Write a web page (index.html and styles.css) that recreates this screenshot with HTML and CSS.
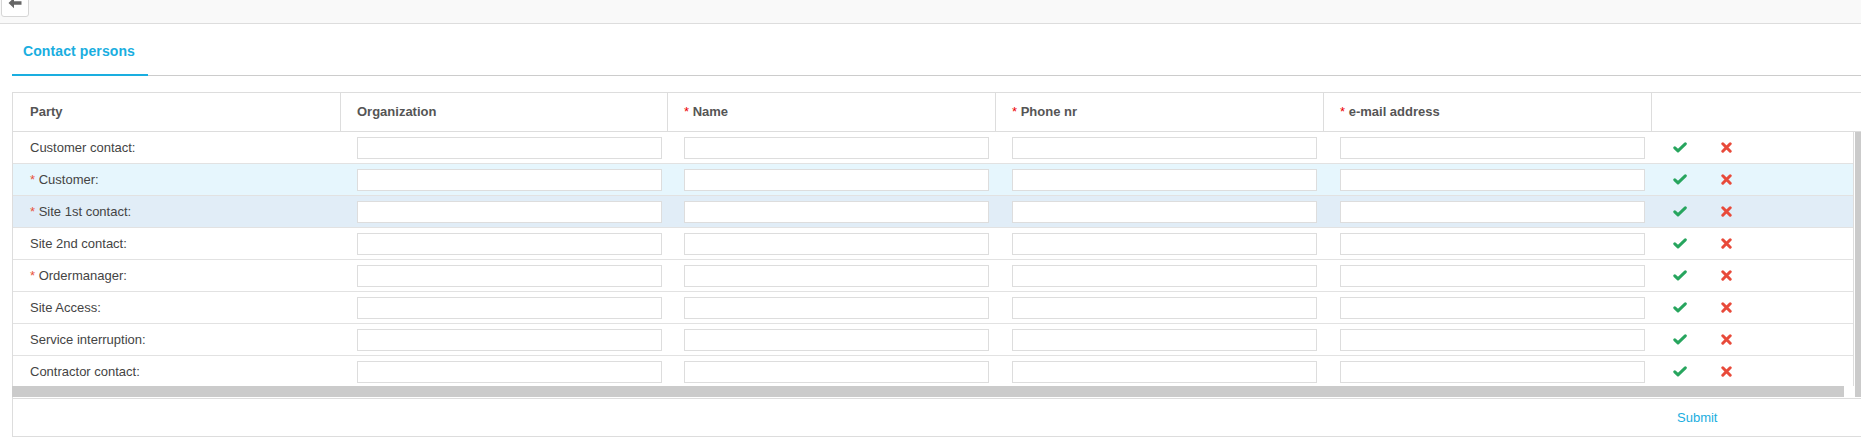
FILE: index.html
```html
<!DOCTYPE html>
<html lang="en">
<head>
<meta charset="utf-8">
<title>Contact persons</title>
<link rel="stylesheet" href="styles.css">
</head>
<body>
<div class="topbar">
  <button class="back" type="button" aria-label="Back">
    <svg width="14" height="12" viewBox="0 0 14 12"><path d="M0.5 6 L6 0.8 L6 4.3 L13.5 4.3 L13.5 7.7 L6 7.7 L6 11.2 Z" fill="#666"/></svg>
  </button>
</div>
<div class="page">
  <ul class="tabs">
    <li class="tab active">Contact persons</li>
  </ul>
  <div class="grid">
    <div class="cols grid-head">
      <div class="th"><span>Party</span></div>
      <div class="th"><span>Organization</span></div>
      <div class="th"><span><span class="req">*</span> Name</span></div>
      <div class="th"><span><span class="req">*</span> Phone nr</span></div>
      <div class="th"><span><span class="req">*</span> e-mail address</span></div>
      <div class="th"></div>
    </div>
    <div class="grid-body">
      <div class="grid-main">
        <div class="rows">
          <div class="cols row">
            <div class="td label"><span>Customer contact:</span></div>
            <div class="td"><input class="inp" type="text"></div>
            <div class="td"><input class="inp" type="text"></div>
            <div class="td"><input class="inp" type="text"></div>
            <div class="td"><input class="inp" type="text"></div>
            <div class="td acts"><svg class="ok" width="14" height="11" viewBox="0 0 14 11"><path d="M1.8 5.8 L5 8.9 L12.3 1.8" fill="none" stroke="#27a55e" stroke-width="3" stroke-linecap="round" stroke-linejoin="round"/></svg><svg class="no" width="11" height="11" viewBox="0 0 11 11"><path d="M1.8 1.8 L9.2 9.2 M9.2 1.8 L1.8 9.2" fill="none" stroke="#e84a3a" stroke-width="3" stroke-linecap="round"/></svg></div>
          </div>
          <div class="cols row hl1">
            <div class="td label"><span><span class="req2">*</span> Customer:</span></div>
            <div class="td"><input class="inp" type="text"></div>
            <div class="td"><input class="inp" type="text"></div>
            <div class="td"><input class="inp" type="text"></div>
            <div class="td"><input class="inp" type="text"></div>
            <div class="td acts"><svg class="ok" width="14" height="11" viewBox="0 0 14 11"><path d="M1.8 5.8 L5 8.9 L12.3 1.8" fill="none" stroke="#27a55e" stroke-width="3" stroke-linecap="round" stroke-linejoin="round"/></svg><svg class="no" width="11" height="11" viewBox="0 0 11 11"><path d="M1.8 1.8 L9.2 9.2 M9.2 1.8 L1.8 9.2" fill="none" stroke="#e84a3a" stroke-width="3" stroke-linecap="round"/></svg></div>
          </div>
          <div class="cols row hl2">
            <div class="td label"><span><span class="req2">*</span> Site 1st contact:</span></div>
            <div class="td"><input class="inp" type="text"></div>
            <div class="td"><input class="inp" type="text"></div>
            <div class="td"><input class="inp" type="text"></div>
            <div class="td"><input class="inp" type="text"></div>
            <div class="td acts"><svg class="ok" width="14" height="11" viewBox="0 0 14 11"><path d="M1.8 5.8 L5 8.9 L12.3 1.8" fill="none" stroke="#27a55e" stroke-width="3" stroke-linecap="round" stroke-linejoin="round"/></svg><svg class="no" width="11" height="11" viewBox="0 0 11 11"><path d="M1.8 1.8 L9.2 9.2 M9.2 1.8 L1.8 9.2" fill="none" stroke="#e84a3a" stroke-width="3" stroke-linecap="round"/></svg></div>
          </div>
          <div class="cols row">
            <div class="td label"><span>Site 2nd contact:</span></div>
            <div class="td"><input class="inp" type="text"></div>
            <div class="td"><input class="inp" type="text"></div>
            <div class="td"><input class="inp" type="text"></div>
            <div class="td"><input class="inp" type="text"></div>
            <div class="td acts"><svg class="ok" width="14" height="11" viewBox="0 0 14 11"><path d="M1.8 5.8 L5 8.9 L12.3 1.8" fill="none" stroke="#27a55e" stroke-width="3" stroke-linecap="round" stroke-linejoin="round"/></svg><svg class="no" width="11" height="11" viewBox="0 0 11 11"><path d="M1.8 1.8 L9.2 9.2 M9.2 1.8 L1.8 9.2" fill="none" stroke="#e84a3a" stroke-width="3" stroke-linecap="round"/></svg></div>
          </div>
          <div class="cols row">
            <div class="td label"><span><span class="req2">*</span> Ordermanager:</span></div>
            <div class="td"><input class="inp" type="text"></div>
            <div class="td"><input class="inp" type="text"></div>
            <div class="td"><input class="inp" type="text"></div>
            <div class="td"><input class="inp" type="text"></div>
            <div class="td acts"><svg class="ok" width="14" height="11" viewBox="0 0 14 11"><path d="M1.8 5.8 L5 8.9 L12.3 1.8" fill="none" stroke="#27a55e" stroke-width="3" stroke-linecap="round" stroke-linejoin="round"/></svg><svg class="no" width="11" height="11" viewBox="0 0 11 11"><path d="M1.8 1.8 L9.2 9.2 M9.2 1.8 L1.8 9.2" fill="none" stroke="#e84a3a" stroke-width="3" stroke-linecap="round"/></svg></div>
          </div>
          <div class="cols row">
            <div class="td label"><span>Site Access:</span></div>
            <div class="td"><input class="inp" type="text"></div>
            <div class="td"><input class="inp" type="text"></div>
            <div class="td"><input class="inp" type="text"></div>
            <div class="td"><input class="inp" type="text"></div>
            <div class="td acts"><svg class="ok" width="14" height="11" viewBox="0 0 14 11"><path d="M1.8 5.8 L5 8.9 L12.3 1.8" fill="none" stroke="#27a55e" stroke-width="3" stroke-linecap="round" stroke-linejoin="round"/></svg><svg class="no" width="11" height="11" viewBox="0 0 11 11"><path d="M1.8 1.8 L9.2 9.2 M9.2 1.8 L1.8 9.2" fill="none" stroke="#e84a3a" stroke-width="3" stroke-linecap="round"/></svg></div>
          </div>
          <div class="cols row">
            <div class="td label"><span>Service interruption:</span></div>
            <div class="td"><input class="inp" type="text"></div>
            <div class="td"><input class="inp" type="text"></div>
            <div class="td"><input class="inp" type="text"></div>
            <div class="td"><input class="inp" type="text"></div>
            <div class="td acts"><svg class="ok" width="14" height="11" viewBox="0 0 14 11"><path d="M1.8 5.8 L5 8.9 L12.3 1.8" fill="none" stroke="#27a55e" stroke-width="3" stroke-linecap="round" stroke-linejoin="round"/></svg><svg class="no" width="11" height="11" viewBox="0 0 11 11"><path d="M1.8 1.8 L9.2 9.2 M9.2 1.8 L1.8 9.2" fill="none" stroke="#e84a3a" stroke-width="3" stroke-linecap="round"/></svg></div>
          </div>
          <div class="cols row">
            <div class="td label"><span>Contractor contact:</span></div>
            <div class="td"><input class="inp" type="text"></div>
            <div class="td"><input class="inp" type="text"></div>
            <div class="td"><input class="inp" type="text"></div>
            <div class="td"><input class="inp" type="text"></div>
            <div class="td acts"><svg class="ok" width="14" height="11" viewBox="0 0 14 11"><path d="M1.8 5.8 L5 8.9 L12.3 1.8" fill="none" stroke="#27a55e" stroke-width="3" stroke-linecap="round" stroke-linejoin="round"/></svg><svg class="no" width="11" height="11" viewBox="0 0 11 11"><path d="M1.8 1.8 L9.2 9.2 M9.2 1.8 L1.8 9.2" fill="none" stroke="#e84a3a" stroke-width="3" stroke-linecap="round"/></svg></div>
          </div>
        </div>
        <div class="hscroll"></div>
      </div>
      <div class="vscroll"></div>
    </div>
    <div class="cols grid-foot">
      <div></div><div></div><div></div><div></div><div></div>
      <div class="foot-cell"><a class="submit" href="#">Submit</a></div>
    </div>
  </div>
</div>
</body>
</html>
```

FILE: styles.css
```css
html, body {
  margin: 0;
  padding: 0;
  overflow: hidden;
  background: #fff;
  font-family: "Liberation Sans", Arial, sans-serif;
  font-size: 13px;
  color: #444;
}

.topbar {
  display: flex;
  height: 23px;
  background: #f9f9f9;
  border-bottom: 1px solid #ddd;
}

.back {
  display: flex;
  align-items: center;
  justify-content: center;
  box-sizing: border-box;
  width: 28px;
  height: 28px;
  margin: -11px 0 0 1px;
  padding: 0;
  background: #fff;
  border: 1px solid #d6d6d6;
  border-radius: 3px;
}

.page {
  padding-left: 12px;
}

.tabs {
  display: flex;
  margin: 0;
  padding: 0;
  list-style: none;
  border-bottom: 1px solid #ccc;
}

.tab {
  padding: 19px 13px 15px 11px;
  line-height: 16px;
  font-size: 14px;
  letter-spacing: 0.1px;
  font-weight: bold;
  color: #1aaee0;
  border-bottom: 2px solid #1aaee0;
  margin-bottom: -1px;
}

.grid {
  margin-top: 16px;
  border: 1px solid #ddd;
  border-right: 0;
}

.cols {
  display: grid;
  grid-template-columns: 327px 327px 328px 328px 328px 1fr;
}

.grid-head {
  height: 38px;
  border-bottom: 1px solid #ddd;
}

.th {
  display: flex;
  align-items: center;
  padding-left: 16px;
  padding-bottom: 1px;
  border-left: 1px solid #ddd;
  font-weight: bold;
  color: #555;
}

.th:first-child {
  border-left: 0;
  padding-left: 17px;
}

.req {
  color: #e00;
  font-weight: normal;
}

.req2 {
  color: #e8543b;
}

.grid-body {
  display: flex;
  margin-bottom: 1px;
}

.grid-main {
  flex: 1;
  min-width: 0;
}

.rows {
  height: 254px;
  overflow: hidden;
  border-right: 1px solid #ddd;
}

.row {
  box-sizing: border-box;
  height: 32px;
  border-bottom: 1px solid #e2e2e2;
  background: #fff;
}

.row.hl1 {
  background: #e6f6fd;
}

.row.hl2 {
  background: #e1edf7;
}

.td {
  display: flex;
  align-items: center;
  padding-left: 17px;
}

.label {
  padding-left: 17px;
  padding-bottom: 1px;
  color: #444;
}

.inp {
  display: block;
  box-sizing: border-box;
  width: 305px;
  height: 22px;
  margin: 0;
  padding: 0 4px;
  background: #fff;
  border: 1px solid #ddd;
  font: inherit;
}

.acts {
  padding-left: 22px;
  gap: 34px;
}

.acts svg {
  display: block;
}

.hscroll {
  height: 11px;
  margin-left: -1px;
  margin-right: 10px;
  background: #cbcbcb;
}

.vscroll {
  width: 6px;
  margin-left: 1px;
  background: #cbcbcb;
}

.grid-foot {
  height: 37px;
  border-top: 1px solid #ddd;
}

.foot-cell {
  display: flex;
  align-items: center;
  padding-left: 26px;
  padding-bottom: 1px;
}

.submit {
  color: #1aaee0;
  text-decoration: none;
}
```
